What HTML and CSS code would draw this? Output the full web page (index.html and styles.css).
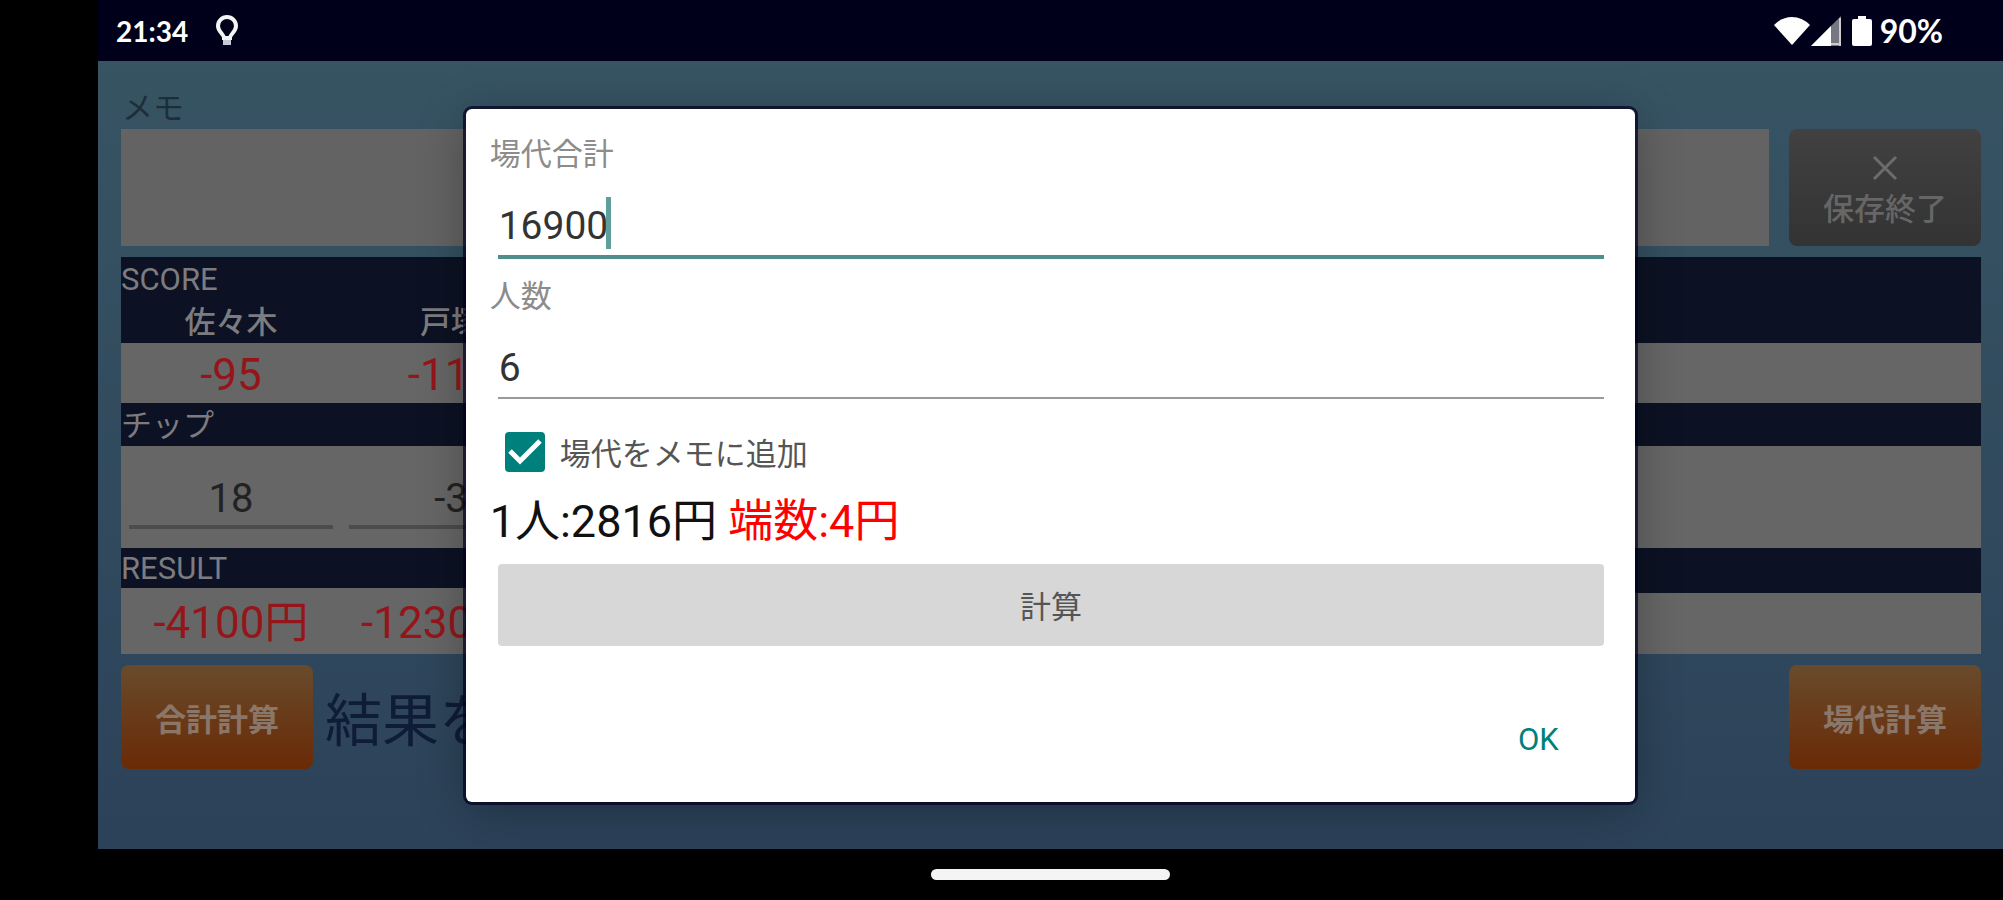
FILE: index.html
```
<!DOCTYPE html>
<html lang="ja">
  <head>
    <meta charset="UTF-8" />
    <meta name="viewport" content="width=device-width, initial-scale=1.0" />
    <title>場代計算</title>
    <link rel="stylesheet" href="styles.css">
  </head>
  <body>
    <header class="status-bar">
      <span class="clock">21:34</span>
      <svg class="bulb" width="26" height="34" viewBox="0 0 26 34">
        <path d="M10 24 C10 20 4 18 4 12 A9 9 0 0 1 22 12 C22 18 16 20 16 24 Z" fill="none" stroke="#f4f4f4" stroke-width="4" />
        <path d="M9 26 H17 V31 H9 Z" fill="#c8c8d8" />
      </svg>
      <div class="status-icons">
        <svg width="36" height="30" viewBox="0 0 36 30">
          <path d="M0 9 Q8 1 18 1 Q28 1 36 9 L18 29 Z" fill="#fff" />
        </svg>
        <svg width="32" height="32" viewBox="0 0 32 32">
          <path d="M31 1 V31 H1 Z" fill="#777782" />
          <path d="M21 11 V31 H1 Z" fill="#fff" />
          <path d="M21 29 H31 M30 3 V31" stroke="#ccc" stroke-width="2" />
        </svg>
        <svg class="battery" width="20" height="32" viewBox="0 0 20 32">
          <path d="M6 1 H14 V4 H18 Q20 4 20 6 V29 Q20 31 18 31 H2 Q0 31 0 29 V6 Q0 4 2 4 H6 Z" fill="#fff" />
        </svg>
        <span class="percent">90%</span>
      </div>
    </header>

    <div class="screen">
      <main class="app">
        <label class="memo-label" for="memo">メモ</label>
        <div class="memo-row">
          <textarea class="memo" id="memo"></textarea>
          <button class="btn btn-gray">
            <svg width="28" height="28" viewBox="0 0 28 28">
              <path d="M3 3 L25 25 M25 3 L3 25" stroke="#6c6c6c" stroke-width="3" />
            </svg>
            保存終了
          </button>
        </div>

        <table class="score-table">
          <colgroup>
            <col class="player" />
            <col class="player" />
            <col />
          </colgroup>
          <tr class="title">
            <th colspan="3">SCORE</th>
          </tr>
          <tr class="names">
            <th>佐々木</th>
            <th>戸塚</th>
            <th></th>
          </tr>
          <tr class="scores">
            <td>-95</td>
            <td>-113</td>
            <td></td>
          </tr>
          <tr class="title">
            <th colspan="3">チップ</th>
          </tr>
          <tr class="chips">
            <td><input type="text" value="18" aria-label="佐々木 チップ" /></td>
            <td><input type="text" value="-3" aria-label="戸塚 チップ" /></td>
            <td></td>
          </tr>
          <tr class="title result-title">
            <th colspan="3">RESULT</th>
          </tr>
          <tr class="results">
            <td>-4100円</td>
            <td>-12300円</td>
            <td class="filler"></td>
          </tr>
        </table>

        <div class="bottom-row">
          <button class="btn btn-orange">合計計算</button>
          <span class="hint">結果を保存</span>
          <button class="btn btn-orange">場代計算</button>
        </div>
      </main>

      <div class="overlay">
        <div class="dialog" role="dialog">
          <label class="field-label" for="total">場代合計</label>
          <div class="field">
            <input class="focused" type="text" id="total" value="16900" />
            <span class="caret"></span>
          </div>

          <label class="field-label" for="people">人数</label>
          <div class="field">
            <input type="text" id="people" value="6" />
          </div>

          <label class="check-row">
            <input type="checkbox" checked />
            <svg class="check" width="40" height="40" viewBox="0 0 40 40">
              <path d="M5 19 L15 29 L35 9" fill="none" stroke="#fff" stroke-width="5" />
            </svg>
            <span>場代をメモに追加</span>
          </label>

          <p class="answer">1人:2816円 <span class="rest">端数:4円</span></p>
          <button class="calc">計算</button>
          <button class="ok">OK</button>
        </div>
      </div>
    </div>

    <footer class="nav-bar">
      <div class="pill"></div>
    </footer>
  </body>
</html>
```
FILE: styles.css
```
* {
  box-sizing: border-box;
}
body {
  margin: 0;
  padding-left: 98px;
  min-height: 100vh;
  display: flex;
  flex-direction: column;
  background-color: #000;
  font-family: Roboto, "Noto Sans CJK JP", sans-serif;
  font-size: 31px;
}
button,
input,
textarea {
  font-family: inherit;
  font-size: inherit;
  border: none;
  border-radius: 0;
  outline: none;
}

/* status bar */
.status-bar {
  height: 61px;
  padding: 0 60px 0 18px;
  display: flex;
  align-items: center;
  background-color: #00001a;
  color: #fff;
  font-family: Lato, sans-serif;
  font-weight: bold;
}
.clock {
  font-size: 28px;
}
.bulb {
  margin-left: 26px;
}
.status-icons {
  margin-left: auto;
  display: flex;
  align-items: center;
}
.battery {
  margin: 0 8px 0 10px;
}
.percent {
  font-size: 32px;
}

/* main screen, colours are the dimmed ones */
.screen {
  position: relative;
  flex: 1;
  display: flex;
}
.app {
  flex: 1;
  padding: 28px 22px 0 23px;
  background: linear-gradient(#375463, #2c4259);
}
.memo-label {
  display: block;
  line-height: 40px;
  padding-left: 1px;
  color: #1d2e38;
}
.memo-row {
  display: flex;
  gap: 20px;
  height: 117px;
  margin-bottom: 11px;
}
.memo {
  flex: 1;
  background-color: #636363;
  resize: none;
}
.btn {
  width: 192px;
  border-radius: 8px;
  font-weight: bold;
}
.btn-gray {
  display: flex;
  flex-direction: column;
  align-items: center;
  justify-content: center;
  gap: 6px;
  padding-top: 12px;
  background: linear-gradient(#414141, #333);
  line-height: 44px;
  color: #666;
  font-weight: 500;
}
.btn-orange {
  background: linear-gradient(#684b2c, #6a2a06);
  color: #8a776a;
}

.score-table {
  width: 100%;
  table-layout: fixed;
  border-spacing: 0;
  background-color: #666;
  text-align: center;
}
.player {
  width: 220px;
}
.score-table th,
.score-table td {
  padding: 0;
}
.score-table th {
  height: 43px;
  padding-top: 2px;
  line-height: 41px;
  background-color: #0c1223;
  color: #7c7c80;
  font-weight: normal;
}
.score-table .title th {
  text-align: left;
}
.score-table .names th {
  font-weight: 500;
}
.score-table .result-title th {
  height: 40px;
  line-height: 38px;
}
.score-table .scores td,
.score-table .results td {
  height: 60px;
  padding-top: 4px;
  line-height: 56px;
  font-size: 44px;
  color: #94161a;
}
.score-table .results td {
  height: 66px;
}
.results .filler {
  border-top: 5px solid #0c1223;
}
.score-table .chips td {
  height: 102px;
  padding: 2px 8px 0;
}
.chips input {
  display: block;
  width: 100%;
  height: 62px;
  padding: 4px 0 0;
  border-bottom: 4px solid #4c4c4c;
  background: none;
  text-align: center;
  font-size: 40px;
  color: #222;
}

.bottom-row {
  display: flex;
  align-items: center;
  height: 104px;
  margin-top: 11px;
}
.bottom-row .btn {
  height: 100%;
}
.hint {
  flex: 1;
  padding: 10px 0 0 12px;
  font-size: 57px;
  line-height: 80px;
  color: #0f1c38;
}

/* dialog */
.overlay {
  position: absolute;
  inset: 0;
  display: flex;
  align-items: center;
  justify-content: center;
}
.dialog {
  width: 61.4%;
  padding: 24px 23px 22px 24px;
  display: flex;
  flex-direction: column;
  background-color: #fff;
  border-radius: 6px;
  box-shadow: 0 0 0 3px rgba(0, 0, 32, 0.7), 0 8px 48px rgba(0, 0, 0, 0.3);
}
.field-label {
  line-height: 44px;
  color: #8c8c8c;
}
.field {
  position: relative;
  margin: 0 8px 16px;
}
.field input {
  display: block;
  width: 100%;
  height: 80px;
  padding: 20px 0 0 1px;
  border-bottom: 2px solid #9a9a9a;
  background: none;
  font-size: 39px;
  color: #333;
}
.field .focused {
  height: 82px;
  border-bottom: 4px solid #4f8f8b;
}
.caret {
  position: absolute;
  left: 108px;
  top: 20px;
  width: 5px;
  height: 52px;
  background-color: #5f9f9b;
}
.check-row {
  position: relative;
  display: flex;
  align-items: center;
  gap: 15px;
  height: 64px;
  margin: 5px 15px 8px;
  color: #555;
}
.check-row input {
  appearance: none;
  width: 40px;
  height: 40px;
  margin: 0;
  border-radius: 4px;
  background-color: #fff;
  border: 4px solid #757575;
}
.check-row input:checked {
  border-color: #00807c;
  background-color: #00807c;
}
.check {
  position: absolute;
  left: 0;
  top: 12px;
}
.answer {
  margin: 0 0 12px;
  line-height: 60px;
  font-size: 45px;
  color: #111;
}
.rest {
  color: #ff0000;
}
.calc {
  height: 82px;
  margin: 0 8px;
  background-color: #d6d7d6;
  border-radius: 4px;
  color: #555;
}
.ok {
  align-self: flex-end;
  width: 148px;
  height: 80px;
  margin-top: 54px;
  background: none;
  color: #00807c;
}

/* gesture bar */
.nav-bar {
  height: 51px;
  display: flex;
  align-items: center;
  justify-content: center;
}
.pill {
  width: 239px;
  height: 11px;
  border-radius: 6px;
  background-color: #f4f4f4;
}
```
